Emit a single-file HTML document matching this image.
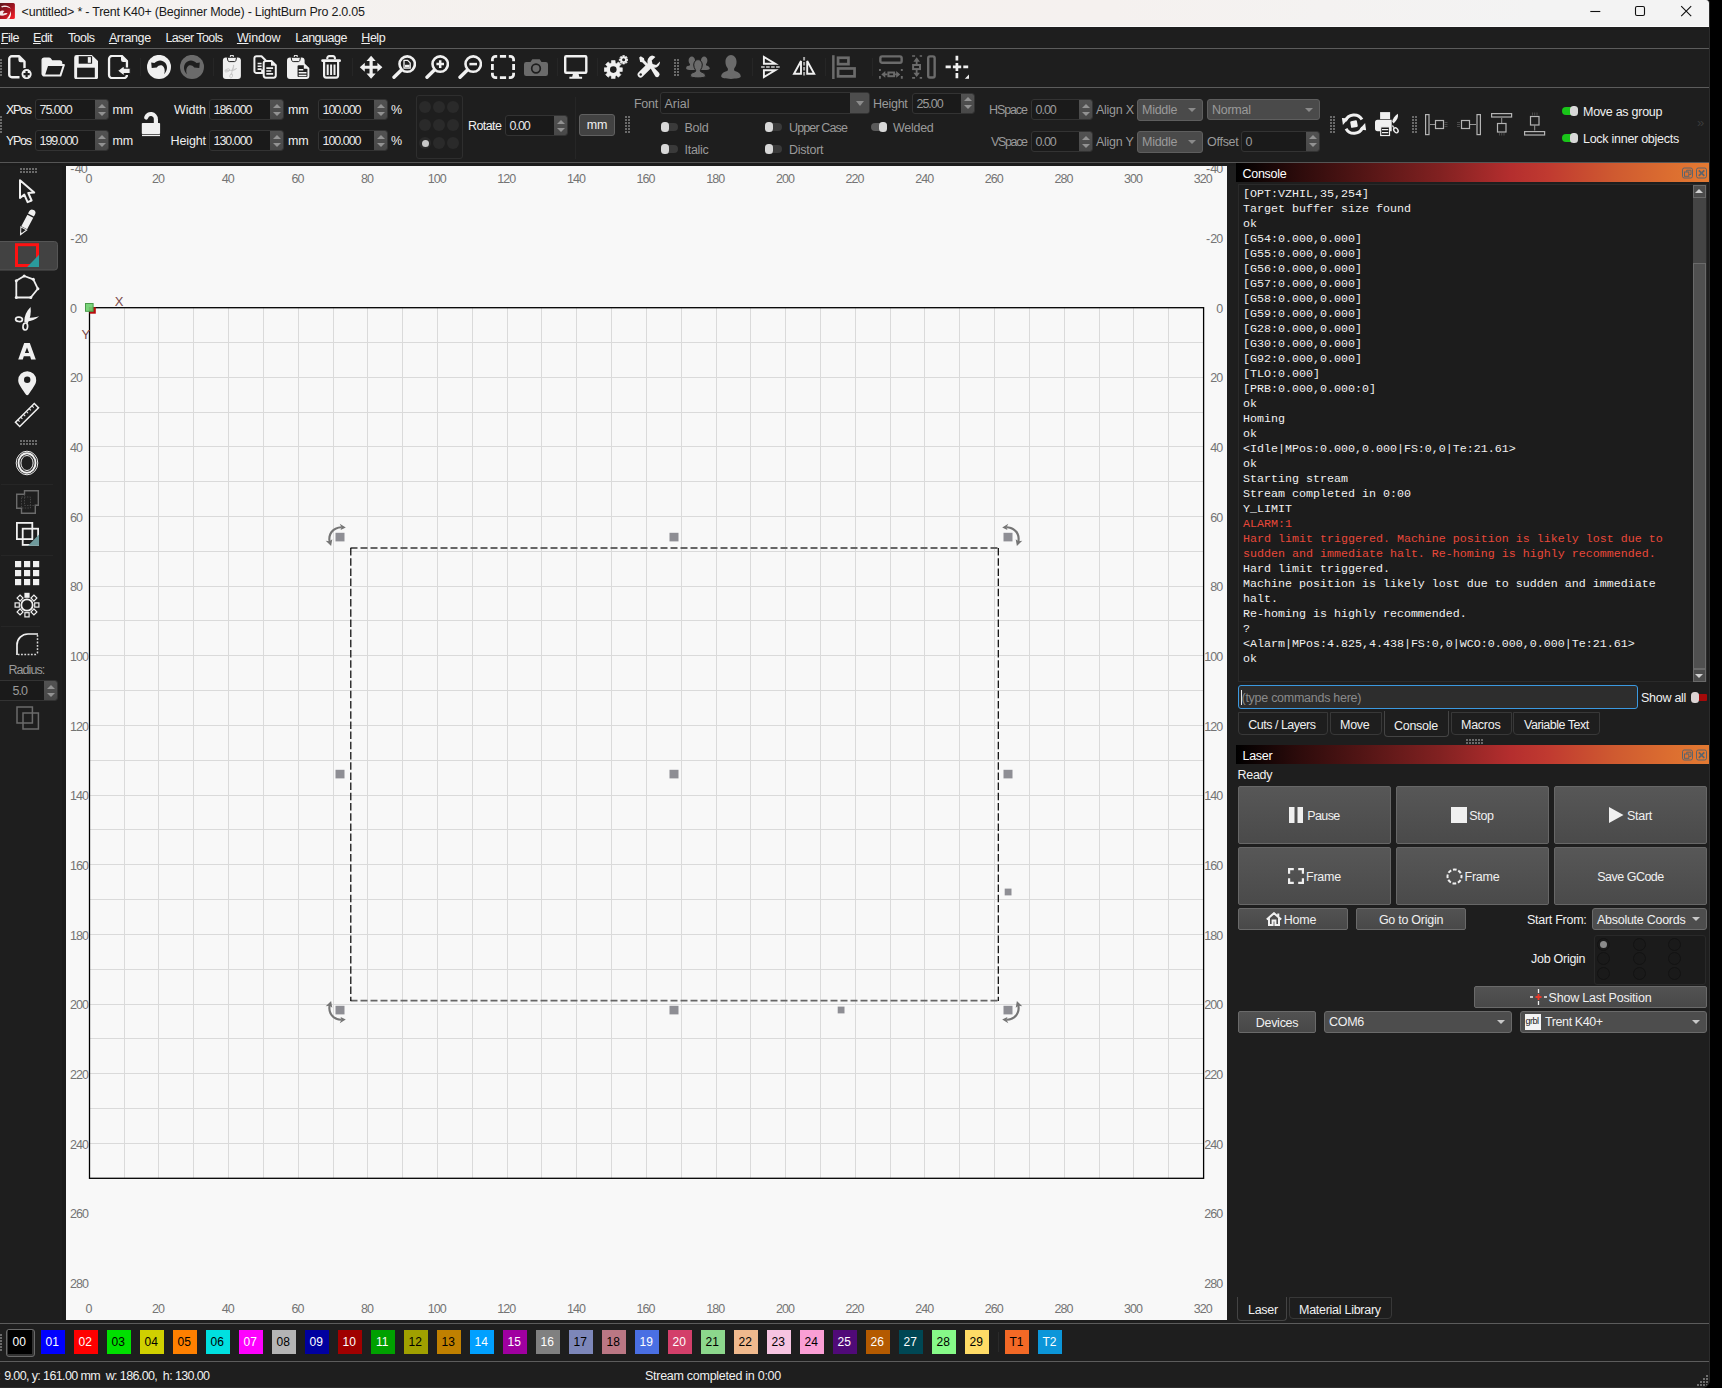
<!DOCTYPE html><html><head><meta charset='utf-8'><title>LightBurn</title><style>
*{box-sizing:border-box;margin:0;padding:0}
html,body{width:1722px;height:1388px;overflow:hidden;background:#000}
body{font-family:"Liberation Sans",sans-serif;font-size:12.500px;letter-spacing:-0.270px;color:#f0f0f0;position:relative}
#win{position:absolute;left:0;top:0;width:1710px;height:1388px;background:#1e1e1e;overflow:hidden;border-radius:0 3px 8px 0;border-right:1px solid #2b2b2b;border-bottom:1px solid #2c2c2c}
.a{position:absolute}
.t{position:absolute;white-space:pre;line-height:14px;height:14px}
.hl{position:absolute;height:1px;background:#5c5c5c}
.sp{position:absolute;background:#1a1a1a;border:1px solid #333;border-radius:3px;height:21px}
.sp .v{position:absolute;left:3.500px;top:3px;line-height:14px;letter-spacing:-1.020px;color:#e8e8e8;white-space:pre}
.sp .b{position:absolute;right:0;top:0;bottom:0;width:13px;background:linear-gradient(#525252,#484848);border-radius:0 2px 2px 0}
.sp .b:before{content:"";position:absolute;left:2.500px;top:3.500px;border:4px solid transparent;border-top:0;border-bottom:4.500px solid #929292}
.sp .b:after{content:"";position:absolute;left:2.500px;bottom:3.500px;border:4px solid transparent;border-bottom:0;border-top:4.500px solid #929292}
.cb{position:absolute;background:#4d4d4d;border:1px solid #6a6a6a;border-radius:3px;height:22px}
.cb .v{position:absolute;left:4px;top:3px;line-height:14px;white-space:pre}
.cb .ar{position:absolute;right:6px;top:8px;border:4px solid transparent;border-bottom:0;border-top:4.500px solid #c8c8c8}
.btn{position:absolute;background:#4d4d4d;border:1px solid #6e6e6e;border-radius:3px;text-align:center;white-space:pre}
.tg{position:absolute;width:16px;height:7.500px;border-radius:4px;background:#333}
.tg i{position:absolute;top:-1.500px;width:8px;height:10.500px;border-radius:3.500px;background:#d8d8d8}
.dim{color:#9a9a9a}
.mono{font-family:"Liberation Mono",monospace;font-size:12px;line-height:15px;white-space:pre;color:#f0f0f0;letter-spacing:0}
.red{color:#e8483a}
.rl{position:absolute;font-size:12.500px;line-height:14px;height:14px;color:#747474;white-space:pre;letter-spacing:-0.950px}
</style></head><body><div id='win'>
<div class='a' style='left:0px;top:0px;width:1709px;height:27px;background:linear-gradient(90deg,#f4f2f1 0%,#f5f1ee 35%,#f5f1ef 65%,#f3f3f3 90%);border-radius:0 3px 0 0'></div>
<div class='a' style='left:0px;top:26px;width:1709px;height:1px;background:#fafafa;'></div>
<svg class='a' style='left:-5px;top:3px' width='20' height='16' viewBox='0 0 20 16'><defs><linearGradient id='lg1' x1='0' y1='0' x2='1' y2='1'><stop offset='0' stop-color='#4a1a1c'/><stop offset='.55' stop-color='#a01420'/><stop offset='1' stop-color='#ff2028'/></linearGradient></defs><rect x='0' y='0' width='19.900' height='15.900' rx='1.500' fill='url(#lg1)'/><path d='M6 3.500c3.500-1.800 7.500-1 10 2.200-2.800-1.700-5.800-2-9-1.200z' fill='#f4e4e4'/><path d='M5 8.500c1.500-1.200 3.200-1.200 4.600-.4-1 .6-1.600 1.500-1.700 2.700 1.400-.8 3-1 4.700-.4-1.500 1.500-3.800 2.400-6.600 2.200-1-.1-1.600-.8-1.400-1.700.2-.8.200-1.600.4-2.400z' fill='#f6eaea'/><path d='M15.800 8c.6 2.600.2 5.200-1.400 7.800h-3c2.400-2 3.800-4.600 4.400-7.800z' fill='#fff'/></svg>
<div class='t ' style='left:21.60px;top:5px;letter-spacing:-0.235px;color:#1a1a1a'>&lt;untitled&gt; * - Trent K40+ (Beginner Mode) - LightBurn Pro 2.0.05</div>
<svg class='a' style='left:1580px;top:0' width='120' height='27' viewBox='0 0 120 27'><g fill='none' stroke='#111' stroke-width='1.100'><path d='M10.300 11.500h10'/><rect x='55.500' y='6.500' width='9' height='9' rx='1.500'/><path d='M101.200 6.200l10 10M111.200 6.200l-10 10'/></g></svg>
<div class='t ' style='left:1.00px;top:31px;letter-spacing:-0.572px;'><u>F</u>ile</div>
<div class='t ' style='left:33.00px;top:31px;letter-spacing:-0.593px;'><u>E</u>dit</div>
<div class='t ' style='left:67.90px;top:31px;letter-spacing:-0.525px;'>Tools</div>
<div class='t ' style='left:108.90px;top:31px;letter-spacing:-0.372px;'><u>A</u>rrange</div>
<div class='t ' style='left:165.40px;top:31px;letter-spacing:-0.597px;'>Laser Tools</div>
<div class='t ' style='left:236.90px;top:31px;letter-spacing:-0.146px;'><u>W</u>indow</div>
<div class='t ' style='left:295.20px;top:31px;letter-spacing:-0.481px;'>Language</div>
<div class='t ' style='left:361.30px;top:31px;letter-spacing:-0.460px;'><u>H</u>elp</div>
<div class='hl' style='left:0px;top:48px;width:1709px;background:#5c5c5c'></div>
<svg class='a' style='left:-3px;top:59px' width='6' height='18' fill='#6a6a6a' shape-rendering='crispEdges'><rect x='0' y='0' width='2' height='2'/><rect x='3' y='0' width='2' height='2'/><rect x='0' y='3' width='2' height='2'/><rect x='3' y='3' width='2' height='2'/><rect x='0' y='6' width='2' height='2'/><rect x='3' y='6' width='2' height='2'/><rect x='0' y='9' width='2' height='2'/><rect x='3' y='9' width='2' height='2'/><rect x='0' y='12' width='2' height='2'/><rect x='3' y='12' width='2' height='2'/><rect x='0' y='15' width='2' height='2'/><rect x='3' y='15' width='2' height='2'/></svg>
<svg class='a' style='left:8px;top:55px' width='24' height='24' viewBox='0 0 24 24'><path d="M11.500 22.300H3.900a2.650 2.650 0 0 1-2.650-2.650V3.900a2.650 2.650 0 0 1 2.650-2.650h7.300l5.300 5.300v6.800" fill="none" stroke="#f0f0f0" stroke-width="2.400" stroke-linejoin="round"/>
<path d="M10.400 1.500v3.600a2.200 2.200 0 0 0 2.200 2.200h3.600z" fill="#f0f0f0"/>
<circle cx="18.600" cy="19.100" r="5.700" fill="#f0f0f0" stroke="#1e1e1e" stroke-width="1.200"/><path d="M18.600 16v6.200M15.500 19.100h6.200" stroke="#1e1e1e" stroke-width="2.200"/></svg>
<svg class='a' style='left:41px;top:55px' width='24' height='24' viewBox='0 0 24 24'><path d="M1.200 19V5a1.900 1.900 0 0 1 1.900-1.900h4.800a1.900 1.900 0 0 1 1.500.8l1.400 2.100h7.900a1.900 1.900 0 0 1 1.900 1.900v2H6L2.200 20.500z" fill="#f0f0f0" stroke="#f0f0f0" stroke-width="1.400" stroke-linejoin="round"/>
<path d="M2.800 20.600L6.300 10h16.600l-3.500 10.600z" fill="#1e1e1e" stroke="#f0f0f0" stroke-width="2" stroke-linejoin="round"/></svg>
<svg class='a' style='left:74px;top:55px' width='24' height='24' viewBox='0 0 24 24'><path d="M2.600 .100h15.200l6.300 5.900v15.900a2.400 2.400 0 0 1-2.400 2.400H2.600a2.400 2.400 0 0 1-2.400-2.400V2.500a2.400 2.400 0 0 1 2.400-2.400z" fill="#f0f0f0"/>
<rect x="4.700" y="1.200" width="13.400" height="7.500" fill="#1e1e1e"/><rect x="13.800" y="2.100" width="3.100" height="5.700" fill="#f0f0f0"/>
<rect x="3.100" y="12.700" width="17.700" height="9.700" fill="#1e1e1e"/></svg>
<svg class='a' style='left:107px;top:55px' width='24' height='24' viewBox='0 0 24 24'><path d="M19.950 13.200V6.100L14.700 .850H5.300A3.250 3.250 0 0 0 2.050 4.100V19.900A3.250 3.250 0 0 0 5.300 23.150H16.700A3.250 3.250 0 0 0 19.950 19.900" fill="none" stroke="#f0f0f0" stroke-width="2.300" stroke-linejoin="round"/>
<path d="M14 1.200v3.600a2.200 2.200 0 0 0 2.200 2.200h3.600z" fill="#f0f0f0"/>
<path d="M10.400 15.800l6.800-5.300v2.600h6v5.400h-6v2.600z" fill="#f0f0f0" stroke="#1e1e1e" stroke-width="1.100" stroke-linejoin="round"/></svg>
<svg class='a' style='left:147px;top:55px' width='24' height='24' viewBox='0 0 24 24'><circle cx="12" cy="11.900" r="12" fill="#f0f0f0"/><path d="M4.200 7.400L4.700 12.900L9.800 12.600C11.300 10.200 13.600 9.600 15.200 10.600C17.600 12.200 18.400 15.500 17.200 19.200C20.600 15.600 20.800 11 18.400 8C15.600 4.800 10.800 4.600 7.400 8.100Z" fill="#1e1e1e"/></svg>
<svg class='a' style='left:180px;top:55px' width='24' height='24' viewBox='0 0 24 24'><circle cx="12" cy="11.900" r="12" fill="#6b6b6b"/><path d="M4.200 7.400L4.700 12.900L9.800 12.600C11.300 10.200 13.600 9.600 15.200 10.600C17.600 12.200 18.400 15.500 17.200 19.200C20.600 15.600 20.800 11 18.400 8C15.600 4.800 10.800 4.600 7.400 8.100Z" fill="#1e1e1e" transform="translate(24 0) scale(-1 1)"/></svg>
<svg class='a' style='left:220px;top:55px' width='24' height='24' viewBox='0 0 24 24'><rect x="2.900" y="2.400" width="18" height="21.600" rx="3" fill="#f0f0f0"/>
<circle cx="11.900" cy="1.700" r="1.500" fill="none" stroke="#f0f0f0" stroke-width="1.300"/>
<path d="M7.200 2.300h9.400l-.7 3.200a1.500 1.500 0 0 1-1.400 1.100H9.300a1.500 1.500 0 0 1-1.400-1.100z" fill="#f0f0f0" stroke="#1e1e1e" stroke-width="1"/>
<g fill="none" stroke="#c4c4c4" stroke-width=".8"><path d="M13.800 10c-1.200 3.500-2 6.500-2.400 10M5.500 15.500c3.500.3 7 0 10.500-1.800"/><ellipse cx="7.300" cy="15.400" rx="2.600" ry="1.300" transform="rotate(-20 7.300 15.400)"/><ellipse cx="11.200" cy="20.800" rx="1.300" ry="2.200" transform="rotate(15 11.200 20.800)"/><path d="M13.300 9.800c.9 1.700.1 4-1.200 5.800M17 13.200c-1.800 1.800-3.800 2.200-5.600 2.400"/></g></svg>
<svg class='a' style='left:253px;top:55px' width='24' height='24' viewBox='0 0 24 24'><path d="M9.200 14.500V18H3.500a2.100 2.100 0 0 1-2.100-2.100V3.300a2.100 2.100 0 0 1 2.100-2.100h5l4 4v4.500" fill="none" stroke="#f0f0f0" stroke-width="2" stroke-linejoin="round"/>
<path d="M4.600 8.500h4M4.600 11.300h4M4.600 14.100h4" stroke="#f0f0f0" stroke-width="1.600"/>
<path d="M12.800 5.900h5.600l4.400 4.400V20.600a2.100 2.100 0 0 1-2.100 2.100h-7.900a2.100 2.100 0 0 1-2.100-2.100V8a2.100 2.100 0 0 1 2.100-2.100z" fill="#1e1e1e" stroke="#f0f0f0" stroke-width="2" stroke-linejoin="round"/>
<path d="M18 5.900v4.800h4.800z" fill="#f0f0f0"/>
<path d="M13.300 13.100h6.800M13.300 16h5M13.300 18.900h6.800" stroke="#f0f0f0" stroke-width="1.600"/></svg>
<svg class='a' style='left:286px;top:55px' width='24' height='24' viewBox='0 0 24 24'><rect x="1" y="2.400" width="17.600" height="21.600" rx="3" fill="#f0f0f0"/>
<circle cx="9.800" cy="1.700" r="1.500" fill="none" stroke="#f0f0f0" stroke-width="1.300"/>
<path d="M5.100 2.300h9.400l-.7 3.200a1.500 1.500 0 0 1-1.400 1.100H7.200a1.500 1.500 0 0 1-1.400-1.100z" fill="#f0f0f0" stroke="#1e1e1e" stroke-width="1"/>
<path d="M12.600 9.300h5.600l4.200 4.200V21a2 2 0 0 1-2 2h-7.800a2 2 0 0 1-2-2V11.300a2 2 0 0 1 2-2z" fill="#1e1e1e" stroke="#f0f0f0" stroke-width="1.900" stroke-linejoin="round"/>
<path d="M17.800 9.300v4.400h4.400z" fill="#f0f0f0"/>
<path d="M12.700 14.700h4.600M12.700 17.700h7.800M12.700 20.600h7.800" stroke="#f0f0f0" stroke-width="1.500"/></svg>
<svg class='a' style='left:319px;top:55px' width='24' height='24' viewBox='0 0 24 24'><path d="M8.300 4.200V3a1.900 1.900 0 0 1 1.900-1.900h3.800a1.900 1.900 0 0 1 1.900 1.900v1.200" fill="none" stroke="#f0f0f0" stroke-width="2.100"/>
<path d="M3.600 5.700h17" stroke="#f0f0f0" stroke-width="2.800" stroke-linecap="round"/>
<path d="M5.100 7v13.600a2 2 0 0 0 2 2h10a2 2 0 0 0 2-2V7" fill="none" stroke="#f0f0f0" stroke-width="2.200"/>
<path d="M8.700 9.500v10.500M12.100 9.500v10.500M15.500 9.500v10.500" stroke="#f0f0f0" stroke-width="2"/></svg>
<svg class='a' style='left:359px;top:55px' width='24' height='24' viewBox='0 0 24 24'><path d="M12.100 .7l4.600 5.300h-3V10.700h4.700v-3l5 4.500-5 4.500v-3h-4.700v4.700h3L12.100 23.700l-4.600-5.300h3V13.700H5.800v3l-5-4.500 5-4.500v3h4.700V6h-3z" fill="#f0f0f0"/></svg>
<svg class='a' style='left:392px;top:55px' width='24' height='24' viewBox='0 0 24 24'><circle cx="15.200" cy="9.100" r="7.700" fill="none" stroke="#f0f0f0" stroke-width="2.600"/><path d="M9.400 15L2 22.300" stroke="#f0f0f0" stroke-width="3.400" stroke-linecap="round"/><path d="M12 5.300h3.600l2.600 2.600v5.200H12z" fill="none" stroke="#f0f0f0" stroke-width="1.300"/><path d="M13 9.800h4.600v2.600H13z" fill="#f0f0f0"/></svg>
<svg class='a' style='left:425px;top:55px' width='24' height='24' viewBox='0 0 24 24'><circle cx="15.200" cy="9.100" r="7.700" fill="none" stroke="#f0f0f0" stroke-width="2.600"/><path d="M9.400 15L2 22.300" stroke="#f0f0f0" stroke-width="3.400" stroke-linecap="round"/><path d="M15.200 5.300v7.600M11.400 9.100h7.600" stroke="#f0f0f0" stroke-width="2.500"/></svg>
<svg class='a' style='left:458px;top:55px' width='24' height='24' viewBox='0 0 24 24'><circle cx="15.200" cy="9.100" r="7.700" fill="none" stroke="#f0f0f0" stroke-width="2.600"/><path d="M9.400 15L2 22.300" stroke="#f0f0f0" stroke-width="3.400" stroke-linecap="round"/><path d="M11.400 9.100h7.600" stroke="#f0f0f0" stroke-width="2.500"/></svg>
<svg class='a' style='left:491px;top:55px' width='24' height='24' viewBox='0 0 24 24'><path d="M1.4 6.2V4.6a3.2 3.2 0 0 1 3.2-3.2H6.2M17.8 1.4H19.400000000000002a3.2 3.2 0 0 1 3.2 3.2V6.2M22.6 17.8V19.400000000000002a3.2 3.2 0 0 1-3.2 3.2H17.8M6.2 22.6H4.6a3.2 3.2 0 0 1-3.2-3.2V17.8M8.9 1.4H15.1M8.9 22.6H15.1M1.4 8.9V15.1M22.6 8.9V15.1" fill="none" stroke="#f0f0f0" stroke-width="2.800"/></svg>
<svg class='a' style='left:524px;top:55px' width='24' height='24' viewBox='0 0 24 24'><path d="M2.200 7h4.300l1.800-2.800h7.400L17.500 7h4.300A2.200 2.200 0 0 1 24 9.200v9.600a2.200 2.200 0 0 1-2.200 2.200H2.200A2.200 2.200 0 0 1 0 18.800V9.200A2.200 2.200 0 0 1 2.200 7z" fill="#6b6b6b"/><circle cx="12" cy="13.500" r="4.300" fill="#6b6b6b" stroke="#1e1e1e" stroke-width="1.700"/></svg>
<svg class='a' style='left:564px;top:55px' width='24' height='24' viewBox='0 0 24 24'><rect x="1.200" y="1.200" width="21.100" height="16.600" rx="1" fill="none" stroke="#f0f0f0" stroke-width="2.400"/>
<path d="M9 18.500h5.500l.8 3.200h2.800v2H5.400v-2h2.800z" fill="#f0f0f0"/></svg>
<svg class='a' style='left:604px;top:55px' width='24' height='24' viewBox='0 0 24 24'><path d="M18.32 12.79 L18.32 16.41 L15.83 16.50 L15.26 17.88 L16.96 19.70 L14.40 22.26 L12.58 20.56 L11.20 21.13 L11.11 23.62 L7.49 23.62 L7.40 21.13 L6.02 20.56 L4.20 22.26 L1.64 19.70 L3.34 17.88 L2.77 16.50 L0.28 16.41 L0.28 12.79 L2.77 12.70 L3.34 11.32 L1.64 9.50 L4.20 6.94 L6.02 8.64 L7.40 8.07 L7.49 5.58 L11.11 5.58 L11.20 8.07 L12.58 8.64 L14.40 6.94 L16.96 9.50 L15.26 11.32 L15.83 12.70Z" fill="#f0f0f0" stroke="#f0f0f0" stroke-width="0.6" stroke-linejoin="round"/><circle cx="9.3" cy="14.6" r="3.3" fill="#1e1e1e"/><path d="M23.91 3.93 L23.91 5.67 L22.67 5.69 L22.40 6.34 L23.26 7.24 L22.04 8.46 L21.14 7.60 L20.49 7.87 L20.47 9.11 L18.73 9.11 L18.71 7.87 L18.06 7.60 L17.16 8.46 L15.94 7.24 L16.80 6.34 L16.53 5.69 L15.29 5.67 L15.29 3.93 L16.53 3.91 L16.80 3.26 L15.94 2.36 L17.16 1.14 L18.06 2.00 L18.71 1.73 L18.73 0.49 L20.47 0.49 L20.49 1.73 L21.14 2.00 L22.04 1.14 L23.26 2.36 L22.40 3.26 L22.67 3.91Z" fill="#f0f0f0" stroke="#f0f0f0" stroke-width="0.6" stroke-linejoin="round"/><circle cx="19.6" cy="4.8" r="1.5" fill="#1e1e1e"/></svg>
<svg class='a' style='left:637px;top:55px' width='24' height='24' viewBox='0 0 24 24'><path d="M2.200 2.600l1.600-1.400 3.200 2 .3 2 5.400 5.600-2 2-5.500-5.500-2-.3z" fill="#f0f0f0"/>
<path d="M13.200 12.800l2-2 6.800 7a2.600 2.600 0 0 1-3.600 3.700z" fill="#f0f0f0"/>
<path d="M15 .6a6 6 0 0 0-4.300 7.600L1.400 17.600a2.900 2.900 0 0 0 4.100 4.100l9.400-9.300A6 6 0 0 0 23 6.600l-3.800 3.500-3.600-1-.9-3.600L18.400 1.900A6 6 0 0 0 15 .6z" fill="#f0f0f0"/>
<circle cx="3.700" cy="19.500" r="1.200" fill="#1e1e1e"/></svg>
<svg class='a' style='left:686px;top:55px' width='24' height='24' viewBox='0 0 24 24'><path d="M0.18399999999999928 13.820000000000002c0-3 1.08-2.43 3.3480000000000003-3.24c0.648-0.27 0.648-1.1880000000000002 0.162-1.836c-0.7020000000000001-0.9720000000000001-1.08-1.9440000000000002-1.08-3.4560000000000004c0-2.16 1.4040000000000001-3.8880000000000003 3.1860000000000004-3.8880000000000003s3.1860000000000004 1.7280000000000002 3.1860000000000004 3.8880000000000003c0 1.512-0.378 2.484-1.08 3.4560000000000004c-0.48600000000000004 0.648-0.48600000000000004 1.566 0.162 1.836c2.2680000000000002 0.81 3.3480000000000003 1.62 3.3480000000000003 3.24c0 1.7280000000000002-11.232000000000001 1.7280000000000002-11.232000000000001 0z" fill="#6b6b6b"/><path d="M12.584 13.820000000000002c0-3 1.08-2.43 3.3480000000000003-3.24c0.648-0.27 0.648-1.1880000000000002 0.162-1.836c-0.7020000000000001-0.9720000000000001-1.08-1.9440000000000002-1.08-3.4560000000000004c0-2.16 1.4040000000000001-3.8880000000000003 3.1860000000000004-3.8880000000000003s3.1860000000000004 1.7280000000000002 3.1860000000000004 3.8880000000000003c0 1.512-0.378 2.484-1.08 3.4560000000000004c-0.48600000000000004 0.648-0.48600000000000004 1.566 0.162 1.836c2.2680000000000002 0.81 3.3480000000000003 1.62 3.3480000000000003 3.24c0 1.7280000000000002-11.232000000000001 1.7280000000000002-11.232000000000001 0z" fill="#6b6b6b"/><path d="M4.5120000000000005 21.159999999999997c0-3 1.44-3.2399999999999998 4.4639999999999995-4.32c0.864-0.36 0.864-1.584 0.216-2.448c-0.9359999999999999-1.296-1.44-2.592-1.44-4.608c0-2.88 1.8719999999999999-5.184 4.248-5.184s4.248 2.304 4.248 5.184c0 2.016-0.504 3.312-1.44 4.608c-0.648 0.864-0.648 2.088 0.216 2.448c3.024 1.08 4.4639999999999995 2.16 4.4639999999999995 4.32c0 2.304-14.975999999999999 2.304-14.975999999999999 0z" fill="#6b6b6b" stroke="#1e1e1e" stroke-width="1"/></svg>
<svg class='a' style='left:719px;top:55px' width='24' height='24' viewBox='0 0 24 24'><path d="M2.224 21.619999999999997c0-3 1.88-4.2299999999999995 5.827999999999999-5.64c1.128-0.47 1.128-2.068 0.282-3.1959999999999997c-1.222-1.692-1.88-3.384-1.88-6.016c0-3.76 2.444-6.768 5.546-6.768s5.546 3.008 5.546 6.768c0 2.6319999999999997-0.6579999999999999 4.324-1.88 6.016c-0.846 1.128-0.846 2.726 0.282 3.1959999999999997c3.948 1.41 5.827999999999999 2.82 5.827999999999999 5.64c0 3.008-19.552 3.008-19.552 0z" fill="#6b6b6b"/></svg>
<svg class='a' style='left:759px;top:55px' width='24' height='24' viewBox='0 0 24 24'><path d="M4.900 2V8.700H16.300z" fill="none" stroke="#f0f0f0" stroke-width="1.900"/>
<path d="M4.900 22V15.200H16.300z" fill="none" stroke="#f0f0f0" stroke-width="1.900"/>
<path d="M2.100 12.100h19.800" stroke="#a4a4a4" stroke-width="2" stroke-dasharray="3.600 1.400"/></svg>
<svg class='a' style='left:792px;top:55px' width='24' height='24' viewBox='0 0 24 24'><path d="M9 6V18.700H2z" fill="none" stroke="#f0f0f0" stroke-width="1.900"/>
<path d="M15.200 6V18.700h7z" fill="none" stroke="#f0f0f0" stroke-width="1.900"/>
<path d="M12.100 2v19.800" stroke="#a4a4a4" stroke-width="2" stroke-dasharray="3.600 1.400"/></svg>
<svg class='a' style='left:832px;top:55px' width='24' height='24' viewBox='0 0 24 24'><path d="M1.350 .2v23.800" stroke="#6b6b6b" stroke-width="2.500"/>
<rect x="6.050" y="2.750" width="10.400" height="6.400" fill="none" stroke="#6b6b6b" stroke-width="2.700"/>
<rect x="6.050" y="13.450" width="16.500" height="7.900" fill="none" stroke="#6b6b6b" stroke-width="2.700"/></svg>
<svg class='a' style='left:879px;top:55px' width='24' height='24' viewBox='0 0 24 24'><rect x="1.350" y="1.400" width="21.300" height="6.400" rx="1.800" fill="none" stroke="#6b6b6b" stroke-width="2.400"/>
<path d="M.9 13.900v2.200M.9 20.900v2.800M22.800 13.900v2.200M22.800 20.900v2.800" stroke="#6b6b6b" stroke-width="1.900"/>
<rect x="9.400" y="17.500" width="5.700" height="3.700" fill="none" stroke="#6b6b6b" stroke-width="2"/>
<path d="M8.400 19.400H5.500M16.100 19.400h2.900" stroke="#6b6b6b" stroke-width="1.800"/>
<path d="M6.300 16L2.300 19.400l4 3.400zM17.200 16l4 3.400-4 3.400z" fill="#6b6b6b"/></svg>
<svg class='a' style='left:912px;top:55px' width='24' height='24' viewBox='0 0 24 24'><rect x="16.200" y="1.400" width="6.450" height="21.100" rx="1.800" fill="none" stroke="#6b6b6b" stroke-width="2.400"/>
<path d="M.1 1h3M7.700 1h2.400M.1 22.900h3M7.700 22.900h2.400" stroke="#6b6b6b" stroke-width="1.700"/>
<rect x="1.100" y="10" width="6.900" height="4.100" fill="none" stroke="#6b6b6b" stroke-width="2"/>
<path d="M4.650 9V6M4.650 15.100V18.200" stroke="#6b6b6b" stroke-width="1.800"/>
<path d="M1.400 6.800L4.650 2.300l3.250 4.500zM1.400 17.700L4.650 21.900l3.250-4.200z" fill="#6b6b6b"/></svg>
<svg class='a' style='left:945px;top:55px' width='24' height='24' viewBox='0 0 24 24'><path d="M11.900 .8v4.600M11.900 8.100v7.900M11.900 17.900v5.450" stroke="#f0f0f0" stroke-width="2.700"/>
<path d="M.6 11.800h5.200M7.900 11.800h8.300M18.300 11.800h4.900" stroke="#f0f0f0" stroke-width="2.700"/>
<path d="M24.100 19.400v4.300H19.800z" fill="#f0f0f0"/></svg>
<div class='a' style='left:139.5px;top:58px;width:1px;height:18px;background:#262626;'></div>
<div class='a' style='left:213px;top:58px;width:1px;height:18px;background:#262626;'></div>
<div class='a' style='left:351.5px;top:58px;width:1px;height:18px;background:#262626;'></div>
<div class='a' style='left:556.5px;top:58px;width:1px;height:18px;background:#262626;'></div>
<div class='a' style='left:597px;top:58px;width:1px;height:18px;background:#262626;'></div>
<div class='a' style='left:752px;top:58px;width:1px;height:18px;background:#262626;'></div>
<div class='a' style='left:824.5px;top:58px;width:1px;height:18px;background:#262626;'></div>
<div class='a' style='left:872px;top:58px;width:1px;height:18px;background:#262626;'></div>
<svg class='a' style='left:674px;top:59px' width='6' height='18' fill='#6a6a6a' shape-rendering='crispEdges'><rect x='0' y='0' width='2' height='2'/><rect x='3' y='0' width='2' height='2'/><rect x='0' y='3' width='2' height='2'/><rect x='3' y='3' width='2' height='2'/><rect x='0' y='6' width='2' height='2'/><rect x='3' y='6' width='2' height='2'/><rect x='0' y='9' width='2' height='2'/><rect x='3' y='9' width='2' height='2'/><rect x='0' y='12' width='2' height='2'/><rect x='3' y='12' width='2' height='2'/><rect x='0' y='15' width='2' height='2'/><rect x='3' y='15' width='2' height='2'/></svg>
<div class='hl' style='left:0px;top:87px;width:1709px;background:#5c5c5c'></div>
<svg class='a' style='left:-3px;top:116px' width='6' height='18' fill='#6a6a6a' shape-rendering='crispEdges'><rect x='0' y='0' width='2' height='2'/><rect x='3' y='0' width='2' height='2'/><rect x='0' y='3' width='2' height='2'/><rect x='3' y='3' width='2' height='2'/><rect x='0' y='6' width='2' height='2'/><rect x='3' y='6' width='2' height='2'/><rect x='0' y='9' width='2' height='2'/><rect x='3' y='9' width='2' height='2'/><rect x='0' y='12' width='2' height='2'/><rect x='3' y='12' width='2' height='2'/><rect x='0' y='15' width='2' height='2'/><rect x='3' y='15' width='2' height='2'/></svg>
<div class='t ' style='left:6.00px;top:103px;letter-spacing:-1.294px;'>XPos</div>
<div class='sp' style='left:35px;top:99px;width:74px;height:21px'><span class='v'>75.000</span><span class='b' style='width:13px'></span></div>
<div class='t ' style='left:112.50px;top:103px;'>mm</div>
<div class='t ' style='left:6.00px;top:134px;letter-spacing:-1.294px;'>YPos</div>
<div class='sp' style='left:35px;top:130px;width:74px;height:21px'><span class='v'>199.000</span><span class='b' style='width:13px'></span></div>
<div class='t ' style='left:112.50px;top:134px;'>mm</div>
<svg class='a' style='left:141px;top:111px' width='21' height='26' viewBox='0 0 21 26'><path d='M14.900 12.500V8A5 5 0 0 0 5.100 6.600' fill='none' stroke='#f0f0f0' stroke-width='4' stroke-linecap='round'/><path d='M14.900 12.500V8' fill='none' stroke='#f0f0f0' stroke-width='4'/><rect x='.8' y='11.900' width='18.300' height='11.100' rx='.8' fill='#f0f0f0'/><rect x='1' y='23.700' width='18' height='1.400' fill='#f0f0f0'/></svg>
<div class='t ' style='left:174.00px;top:103px;letter-spacing:-0.008px;'>Width</div>
<div class='sp' style='left:209px;top:99px;width:75px;height:21px'><span class='v'>186.000</span><span class='b' style='width:13px'></span></div>
<div class='t ' style='left:288.00px;top:103px;'>mm</div>
<div class='sp' style='left:318px;top:99px;width:70px;height:21px'><span class='v'>100.000</span><span class='b' style='width:13px'></span></div>
<div class='t ' style='left:391.00px;top:103px;'>%</div>
<div class='t ' style='left:170.50px;top:134px;letter-spacing:-0.127px;'>Height</div>
<div class='sp' style='left:209px;top:130px;width:75px;height:21px'><span class='v'>130.000</span><span class='b' style='width:13px'></span></div>
<div class='t ' style='left:288.00px;top:134px;'>mm</div>
<div class='sp' style='left:318px;top:130px;width:70px;height:21px'><span class='v'>100.000</span><span class='b' style='width:13px'></span></div>
<div class='t ' style='left:391.00px;top:134px;'>%</div>
<div class='a' style='left:416px;top:95px;width:47px;height:64px;border:1px solid #2e2e2e;border-radius:3px'></div>
<div class='a' style='left:419px;top:101px;width:12px;height:12px;border-radius:6px;background:#2a2a2a'></div>
<div class='a' style='left:433px;top:101px;width:12px;height:12px;border-radius:6px;background:#2a2a2a'></div>
<div class='a' style='left:447px;top:101px;width:12px;height:12px;border-radius:6px;background:#2a2a2a'></div>
<div class='a' style='left:419px;top:119px;width:12px;height:12px;border-radius:6px;background:#2a2a2a'></div>
<div class='a' style='left:433px;top:119px;width:12px;height:12px;border-radius:6px;background:#2a2a2a'></div>
<div class='a' style='left:447px;top:119px;width:12px;height:12px;border-radius:6px;background:#2a2a2a'></div>
<div class='a' style='left:419px;top:137px;width:12px;height:12px;border-radius:6px;background:#2a2a2a'></div>
<div class='a' style='left:433px;top:137px;width:12px;height:12px;border-radius:6px;background:#2a2a2a'></div>
<div class='a' style='left:447px;top:137px;width:12px;height:12px;border-radius:6px;background:#2a2a2a'></div>
<div class='a' style='left:421.500px;top:139.500px;width:7px;height:7px;border-radius:4px;background:#c8c8c8'></div>
<div class='t ' style='left:468.00px;top:119px;letter-spacing:-0.583px;'>Rotate</div>
<div class='sp' style='left:505px;top:115px;width:63px;height:21px'><span class='v'>0.00</span><span class='b' style='width:13px'></span></div>
<div class='a' style='left:574.5px;top:97px;width:1px;height:62px;background:#262626;'></div>
<div class='btn' style='left:579px;top:114px;width:36px;height:22px;line-height:20px;background:#424242;border-color:#606060'>mm</div>
<svg class='a' style='left:625px;top:116px' width='6' height='18' fill='#6a6a6a' shape-rendering='crispEdges'><rect x='0' y='0' width='2' height='2'/><rect x='3' y='0' width='2' height='2'/><rect x='0' y='3' width='2' height='2'/><rect x='3' y='3' width='2' height='2'/><rect x='0' y='6' width='2' height='2'/><rect x='3' y='6' width='2' height='2'/><rect x='0' y='9' width='2' height='2'/><rect x='3' y='9' width='2' height='2'/><rect x='0' y='12' width='2' height='2'/><rect x='3' y='12' width='2' height='2'/><rect x='0' y='15' width='2' height='2'/><rect x='3' y='15' width='2' height='2'/></svg>
<div class='t dim' style='left:634.00px;top:97px;'>Font</div>
<div class='sp' style='left:660px;top:92px;width:210px;height:22px;background:#1b1b1b'><span class='v' style='letter-spacing:0;color:#9a9a9a;top:4px'>Arial</span><span class='b' style='width:19px;background:#4d4d4d'></span></div>
<div class='a' style='left:855.500px;top:100px;border:4.500px solid transparent;border-bottom:0;border-top:5px solid #8a8a8a'></div>
<div class='a' style='left:852px;top:93px;width:17px;height:20px;background:#4d4d4d;border-radius:0 2px 2px 0'></div>
<div class='a' style='left:856px;top:101px;border:4.500px solid transparent;border-bottom:0;border-top:5px solid #8c8c8c'></div>
<div class='t dim' style='left:873.00px;top:97px;'>Height</div>
<div class='sp' style='left:912px;top:92.5px;width:63px;height:21px'><span class='v' style='color:#9a9a9a'>25.00</span><span class='b' style='width:13px'></span></div>
<div class='tg' style='left:662px;top:123px;background:#3a3a3a'><i style='left:-1px'></i></div>
<div class='t dim' style='left:684.50px;top:121px;'>Bold</div>
<div class='tg' style='left:662px;top:145px;background:#3a3a3a'><i style='left:-1px'></i></div>
<div class='t dim' style='left:684.50px;top:143px;'>Italic</div>
<div class='tg' style='left:766px;top:123px;background:#3a3a3a'><i style='left:-1px'></i></div>
<div class='t dim' style='left:789.00px;top:121px;letter-spacing:-0.866px;'>Upper Case</div>
<div class='tg' style='left:766px;top:145px;background:#3a3a3a'><i style='left:-1px'></i></div>
<div class='t dim' style='left:789.00px;top:143px;'>Distort</div>
<div class='tg' style='left:871px;top:123px;background:#5a5a5a'><i style='left:8px'></i></div>
<div class='t dim' style='left:893.00px;top:121px;'>Welded</div>
<div class='t dim' style='left:989.00px;top:103px;letter-spacing:-1.106px;'>HSpace</div>
<div class='sp' style='left:1031px;top:99px;width:62px;height:21px'><span class='v' style='color:#9a9a9a'>0.00</span><span class='b' style='width:13px'></span></div>
<div class='t dim' style='left:991.00px;top:135px;letter-spacing:-1.350px;'>VSpace</div>
<div class='sp' style='left:1031px;top:131px;width:62px;height:21px'><span class='v' style='color:#9a9a9a'>0.00</span><span class='b' style='width:13px'></span></div>
<div class='t dim' style='left:1096.00px;top:103px;'>Align X</div>
<div class='cb' style='left:1137px;top:98.5px;width:66px;height:22px;border-color:#5e5e5e;background:#4a4a4a'><span class='v' style='top:3px;color:#9a9a9a'>Middle</span><span class='ar' style='border-top-color:#8a8a8a'></span></div>
<div class='t dim' style='left:1096.00px;top:135px;'>Align Y</div>
<div class='cb' style='left:1137px;top:130.5px;width:66px;height:22px;border-color:#5e5e5e;background:#4a4a4a'><span class='v' style='top:3px;color:#9a9a9a'>Middle</span><span class='ar' style='border-top-color:#8a8a8a'></span></div>
<div class='cb' style='left:1207px;top:98.5px;width:113px;height:21px;border-color:#5e5e5e;background:#4a4a4a'><span class='v' style='top:3px;color:#9a9a9a'>Normal</span><span class='ar' style='border-top-color:#8a8a8a'></span></div>
<div class='t dim' style='left:1207.00px;top:135px;'>Offset</div>
<div class='sp' style='left:1241px;top:130.5px;width:79px;height:21px'><span class='v' style='color:#9a9a9a'>0</span><span class='b' style='width:13px'></span></div>
<svg class='a' style='left:1330px;top:116px' width='6' height='18' fill='#6a6a6a' shape-rendering='crispEdges'><rect x='0' y='0' width='2' height='2'/><rect x='3' y='0' width='2' height='2'/><rect x='0' y='3' width='2' height='2'/><rect x='3' y='3' width='2' height='2'/><rect x='0' y='6' width='2' height='2'/><rect x='3' y='6' width='2' height='2'/><rect x='0' y='9' width='2' height='2'/><rect x='3' y='9' width='2' height='2'/><rect x='0' y='12' width='2' height='2'/><rect x='3' y='12' width='2' height='2'/><rect x='0' y='15' width='2' height='2'/><rect x='3' y='15' width='2' height='2'/></svg>
<svg class='a' style='left:1341px;top:112px' width='26' height='25' viewBox='0 0 26 25'><g fill='none' stroke='#f0f0f0' stroke-width='3'><path d='M4.350 8.950A9.200 9.200 0 0 1 20.970 7.500'/><path d='M21.650 15.250A9.200 9.200 0 0 1 5.030 16.700'/></g><path d='M.9 6L7.600 6.600 1.900 13.100z' fill='#f0f0f0'/><path d='M25.100 18.200L18.400 17.600 24.100 11.100z' fill='#f0f0f0'/><rect x='9.600' y='8.700' width='6.800' height='6.800' rx='1' fill='#f0f0f0' transform='rotate(-10 13 12.100)'/></svg>
<svg class='a' style='left:1375px;top:111px' width='26' height='26' viewBox='0 0 26 26'><rect x='5.100' y='1.100' width='10' height='7' fill='#f0f0f0'/><path d='M2.600 8.800H16.700V20.200H2.600A2.600 2.600 0 0 1 0 17.600V11.400A2.600 2.600 0 0 1 2.600 8.800z' fill='#f0f0f0'/><rect x='5.700' y='15.900' width='8.800' height='8.600' fill='#161616' stroke='#f0f0f0' stroke-width='1.200'/><path d='M7 18.600h6.300M7 21.600h6.300' stroke='#f0f0f0' stroke-width='1.300'/><path d='M22.900 2.700c.8 3.300-.9 6.600-4.300 9.700l-1.500-1.800c.9-3.200 2.800-6 5.800-7.900z' fill='#f0f0f0'/><ellipse cx='20.900' cy='19.300' rx='1.900' ry='2.700' transform='rotate(-35 20.900 19.300)' fill='none' stroke='#f0f0f0' stroke-width='1.400'/><path d='M17.300 14.500l2 2.500' stroke='#d0d0d0' stroke-width='1.300'/></svg>
<svg class='a' style='left:1412px;top:116px' width='6' height='18' fill='#6a6a6a' shape-rendering='crispEdges'><rect x='0' y='0' width='2' height='2'/><rect x='3' y='0' width='2' height='2'/><rect x='0' y='3' width='2' height='2'/><rect x='3' y='3' width='2' height='2'/><rect x='0' y='6' width='2' height='2'/><rect x='3' y='6' width='2' height='2'/><rect x='0' y='9' width='2' height='2'/><rect x='3' y='9' width='2' height='2'/><rect x='0' y='12' width='2' height='2'/><rect x='3' y='12' width='2' height='2'/><rect x='0' y='15' width='2' height='2'/><rect x='3' y='15' width='2' height='2'/></svg>
<svg class='a' style='left:1424px;top:112px' width='125' height='26' viewBox='0 0 125 26'><g fill='none' stroke='#b4b4b4' stroke-width='1.200'>
<rect x='1.600' y='2.600' width='3.400' height='20'/><rect x='11.500' y='8.500' width='8' height='8'/><path d='M6 12.500h5' stroke-width='.8'/>
<rect x='53' y='2.600' width='3.400' height='20'/><rect x='37.500' y='8.500' width='8' height='8'/><path d='M46 12.500h6' stroke-width='.8'/>
<rect x='67.600' y='1.600' width='20' height='3.400'/><rect x='73.500' y='11.500' width='8.500' height='8.500'/><path d='M77.700 6v5' stroke-width='.8'/>
<rect x='100.600' y='19.600' width='20' height='3.400'/><rect x='106.500' y='4.500' width='8.500' height='8.500'/><path d='M110.700 13.500v5' stroke-width='.8'/>
</g><g stroke='#555' stroke-width='.8'><path d='M20.500 10.500h3M20.500 12.500h3M20.500 14.500h3M33 10.500h3M33 12.500h3M33 14.500h3M75.500 21v2.500M77.700 21v2.500M80 21v2.500M108.500 .5v3M110.700 .5v3M113 .5v3'/></g></svg>
<div class='tg' style='left:1562px;top:107px;background:#19c519'><i style='left:8px'></i></div>
<div class='t ' style='left:1583.00px;top:105px;'>Move as group</div>
<div class='tg' style='left:1562px;top:134px;background:#19c519'><i style='left:8px'></i></div>
<div class='t ' style='left:1583.00px;top:132px;'>Lock inner objects</div>
<div class='t ' style='left:1697.00px;top:116px;color:#3a3a3a;font-size:13px'>»</div>
<div class='hl' style='left:0px;top:162px;width:1709px;background:#555'></div>
<div class='a' style='left:0px;top:163px;width:1709px;height:3px;background:#1c1c1c;'></div>
<svg class='a' style='left:66px;top:166px' width='1161' height='1154' viewBox='66 166 1161 1154'><rect x='66' y='166' width='1161' height='1154' fill='#f8f8f8'/><path d='M124.5 308V1178M158.5 308V1178M193.5 308V1178M228.5 308V1178M263.5 308V1178M298.5 308V1178M333.5 308V1178M367.5 308V1178M402.5 308V1178M437.5 308V1178M472.5 308V1178M507.5 308V1178M541.5 308V1178M576.5 308V1178M611.5 308V1178M646.5 308V1178M681.5 308V1178M716.5 308V1178M750.5 308V1178M785.5 308V1178M820.5 308V1178M855.5 308V1178M890.5 308V1178M924.5 308V1178M959.5 308V1178M994.5 308V1178M1029.5 308V1178M1064.5 308V1178M1099.5 308V1178M1133.5 308V1178M1168.5 308V1178M89 342.5H1203M89 377.5H1203M89 412.5H1203M89 446.5H1203M89 481.5H1203M89 516.5H1203M89 551.5H1203M89 586.5H1203M89 620.5H1203M89 655.5H1203M89 690.5H1203M89 725.5H1203M89 760.5H1203M89 795.5H1203M89 829.5H1203M89 864.5H1203M89 899.5H1203M89 934.5H1203M89 969.5H1203M89 1004.5H1203M89 1038.5H1203M89 1073.5H1203M89 1108.5H1203M89 1143.5H1203' stroke='#dadada' stroke-width='1' fill='none' shape-rendering='crispEdges'/><rect x='89.500' y='307.700' width='1114.100' height='870.600' fill='none' stroke='#000' stroke-width='1.300'/><rect x='89.600' y='307.200' width='6.200' height='6.500' fill='#b80c0c'/><rect x='85.500' y='303.500' width='7.600' height='7.800' fill='#6fd06f' fill-opacity='.92' stroke='#4a9a4a' stroke-width='1'/><path d='M350.500 548H998.500' stroke='#666' stroke-width='1.800' stroke-dasharray='7 3' fill='none'/><path d='M350.500 1000.700H998.500' stroke='#666' stroke-width='1.800' stroke-dasharray='7 3' fill='none'/><path d='M350.800 548V1001' stroke='#000' stroke-width='1.200' stroke-dasharray='7.500 2.700' fill='none'/><path d='M998.300 548V1001' stroke='#000' stroke-width='1.200' stroke-dasharray='7.500 2.700' fill='none'/><rect x='335.5' y='532.8' width='9' height='8.600' fill='#8e8e94'/><rect x='669.5' y='532.8' width='9' height='8.600' fill='#8e8e94'/><rect x='1003.5' y='532.8' width='9' height='8.600' fill='#8e8e94'/><rect x='335.5' y='769.8' width='9' height='8.600' fill='#8e8e94'/><rect x='669.5' y='769.8' width='9' height='8.600' fill='#8e8e94'/><rect x='1003.5' y='769.8' width='9' height='8.600' fill='#8e8e94'/><rect x='335.5' y='1005.8' width='9' height='8.600' fill='#8e8e94'/><rect x='669.5' y='1005.8' width='9' height='8.600' fill='#8e8e94'/><rect x='1003.5' y='1005.8' width='9' height='8.600' fill='#8e8e94'/><rect x='1004.7' y='888.6' width='6.800' height='6.800' fill='#8e8e94'/><rect x='837.7' y='1006.6' width='6.800' height='6.800' fill='#8e8e94'/><g transform='translate(340 537) scale(1 1)'><g fill='#757575' stroke='none'><path d='M-11.200 5.500 C-13.500 -3 -8 -10.500 1.500 -10.800 L1.700 -8.800 C-6.300 -8.500 -10.900 -2.500 -9.200 5z'/><path d='M-0.300 -13.200 L5.800 -9.500 L0.600 -7.100 L1.500 -9.700z'/><path d='M-14.300 3.800 L-8.900 9 L-7.700 2.300 L-10.300 4.300z'/></g></g><g transform='translate(1008 537) scale(-1 1)'><g fill='#757575' stroke='none'><path d='M-11.200 5.500 C-13.500 -3 -8 -10.500 1.500 -10.800 L1.700 -8.800 C-6.300 -8.500 -10.900 -2.500 -9.200 5z'/><path d='M-0.300 -13.200 L5.800 -9.500 L0.600 -7.100 L1.500 -9.700z'/><path d='M-14.300 3.800 L-8.900 9 L-7.700 2.300 L-10.300 4.300z'/></g></g><g transform='translate(340 1010) scale(1 -1)'><g fill='#757575' stroke='none'><path d='M-11.200 5.500 C-13.500 -3 -8 -10.500 1.500 -10.800 L1.700 -8.800 C-6.300 -8.500 -10.900 -2.500 -9.200 5z'/><path d='M-0.300 -13.200 L5.800 -9.500 L0.600 -7.100 L1.500 -9.700z'/><path d='M-14.300 3.800 L-8.900 9 L-7.700 2.300 L-10.300 4.300z'/></g></g><g transform='translate(1008 1010) scale(-1 -1)'><g fill='#757575' stroke='none'><path d='M-11.200 5.500 C-13.500 -3 -8 -10.500 1.500 -10.800 L1.700 -8.800 C-6.300 -8.500 -10.900 -2.500 -9.200 5z'/><path d='M-0.300 -13.200 L5.800 -9.500 L0.600 -7.100 L1.500 -9.700z'/><path d='M-14.300 3.800 L-8.900 9 L-7.700 2.300 L-10.300 4.300z'/></g></g></svg>
<div class='t ' style='left:114.70px;top:295px;color:#7a4848;font-size:13px;letter-spacing:0'>X</div>
<div class='t ' style='left:81.50px;top:328px;color:#7a4848;font-size:13px;letter-spacing:0'>Y</div>
<div class='a' style='left:66px;top:166px;width:1161px;height:1154px;overflow:hidden'><div class='a' style='left:-66px;top:-166px'>
<div class='rl' style='left:68.5px;width:40px;text-align:center;top:172px'>0</div>
<div class='rl' style='left:68.5px;width:40px;text-align:center;top:1301.5px'>0</div>
<div class='rl' style='left:138.14px;width:40px;text-align:center;top:172px'>20</div>
<div class='rl' style='left:138.14px;width:40px;text-align:center;top:1301.5px'>20</div>
<div class='rl' style='left:207.77999999999997px;width:40px;text-align:center;top:172px'>40</div>
<div class='rl' style='left:207.77999999999997px;width:40px;text-align:center;top:1301.5px'>40</div>
<div class='rl' style='left:277.42px;width:40px;text-align:center;top:172px'>60</div>
<div class='rl' style='left:277.42px;width:40px;text-align:center;top:1301.5px'>60</div>
<div class='rl' style='left:347.06px;width:40px;text-align:center;top:172px'>80</div>
<div class='rl' style='left:347.06px;width:40px;text-align:center;top:1301.5px'>80</div>
<div class='rl' style='left:416.70000000000005px;width:40px;text-align:center;top:172px'>100</div>
<div class='rl' style='left:416.70000000000005px;width:40px;text-align:center;top:1301.5px'>100</div>
<div class='rl' style='left:486.34000000000003px;width:40px;text-align:center;top:172px'>120</div>
<div class='rl' style='left:486.34000000000003px;width:40px;text-align:center;top:1301.5px'>120</div>
<div class='rl' style='left:555.98px;width:40px;text-align:center;top:172px'>140</div>
<div class='rl' style='left:555.98px;width:40px;text-align:center;top:1301.5px'>140</div>
<div class='rl' style='left:625.62px;width:40px;text-align:center;top:172px'>160</div>
<div class='rl' style='left:625.62px;width:40px;text-align:center;top:1301.5px'>160</div>
<div class='rl' style='left:695.26px;width:40px;text-align:center;top:172px'>180</div>
<div class='rl' style='left:695.26px;width:40px;text-align:center;top:1301.5px'>180</div>
<div class='rl' style='left:764.9000000000001px;width:40px;text-align:center;top:172px'>200</div>
<div class='rl' style='left:764.9000000000001px;width:40px;text-align:center;top:1301.5px'>200</div>
<div class='rl' style='left:834.5400000000001px;width:40px;text-align:center;top:172px'>220</div>
<div class='rl' style='left:834.5400000000001px;width:40px;text-align:center;top:1301.5px'>220</div>
<div class='rl' style='left:904.1800000000001px;width:40px;text-align:center;top:172px'>240</div>
<div class='rl' style='left:904.1800000000001px;width:40px;text-align:center;top:1301.5px'>240</div>
<div class='rl' style='left:973.82px;width:40px;text-align:center;top:172px'>260</div>
<div class='rl' style='left:973.82px;width:40px;text-align:center;top:1301.5px'>260</div>
<div class='rl' style='left:1043.46px;width:40px;text-align:center;top:172px'>280</div>
<div class='rl' style='left:1043.46px;width:40px;text-align:center;top:1301.5px'>280</div>
<div class='rl' style='left:1113.1000000000001px;width:40px;text-align:center;top:172px'>300</div>
<div class='rl' style='left:1113.1000000000001px;width:40px;text-align:center;top:1301.5px'>300</div>
<div class='rl' style='left:1182.74px;width:40px;text-align:center;top:172px'>320</div>
<div class='rl' style='left:1182.74px;width:40px;text-align:center;top:1301.5px'>320</div>
<div class='rl' style='left:70.3px;top:162.4px'><span style='letter-spacing:.2px'>-</span>40</div>
<div class='rl' style='left:1182.3px;width:40px;text-align:right;top:162.4px'><span style='letter-spacing:.2px'>-</span>40</div>
<div class='rl' style='left:70.3px;top:232.4px'><span style='letter-spacing:.2px'>-</span>20</div>
<div class='rl' style='left:1182.3px;width:40px;text-align:right;top:232.4px'><span style='letter-spacing:.2px'>-</span>20</div>
<div class='rl' style='left:70px;top:302.4px'>0</div>
<div class='rl' style='left:1182.3px;width:40px;text-align:right;top:302.4px'>0</div>
<div class='rl' style='left:70px;top:371.4px'>20</div>
<div class='rl' style='left:1182.3px;width:40px;text-align:right;top:371.4px'>20</div>
<div class='rl' style='left:70px;top:441.4px'>40</div>
<div class='rl' style='left:1182.3px;width:40px;text-align:right;top:441.4px'>40</div>
<div class='rl' style='left:70px;top:511.4px'>60</div>
<div class='rl' style='left:1182.3px;width:40px;text-align:right;top:511.4px'>60</div>
<div class='rl' style='left:70px;top:580.4px'>80</div>
<div class='rl' style='left:1182.3px;width:40px;text-align:right;top:580.4px'>80</div>
<div class='rl' style='left:70px;top:650.4px'>100</div>
<div class='rl' style='left:1182.3px;width:40px;text-align:right;top:650.4px'>100</div>
<div class='rl' style='left:70px;top:720.4px'>120</div>
<div class='rl' style='left:1182.3px;width:40px;text-align:right;top:720.4px'>120</div>
<div class='rl' style='left:70px;top:789.4px'>140</div>
<div class='rl' style='left:1182.3px;width:40px;text-align:right;top:789.4px'>140</div>
<div class='rl' style='left:70px;top:859.4px'>160</div>
<div class='rl' style='left:1182.3px;width:40px;text-align:right;top:859.4px'>160</div>
<div class='rl' style='left:70px;top:929.4px'>180</div>
<div class='rl' style='left:1182.3px;width:40px;text-align:right;top:929.4px'>180</div>
<div class='rl' style='left:70px;top:998.4px'>200</div>
<div class='rl' style='left:1182.3px;width:40px;text-align:right;top:998.4px'>200</div>
<div class='rl' style='left:70px;top:1068.4px'>220</div>
<div class='rl' style='left:1182.3px;width:40px;text-align:right;top:1068.4px'>220</div>
<div class='rl' style='left:70px;top:1138.4px'>240</div>
<div class='rl' style='left:1182.3px;width:40px;text-align:right;top:1138.4px'>240</div>
<div class='rl' style='left:70px;top:1207.4px'>260</div>
<div class='rl' style='left:1182.3px;width:40px;text-align:right;top:1207.4px'>260</div>
<div class='rl' style='left:70px;top:1277.4px'>280</div>
<div class='rl' style='left:1182.3px;width:40px;text-align:right;top:1277.4px'>280</div>
</div></div>
<div class='a' style='left:62px;top:166px;width:4px;height:1154px;background:#1b1b1b;'></div>
<svg class='a' style='left:20px;top:168px' height='6' width='18' fill='#6a6a6a' shape-rendering='crispEdges'><rect y='0' x='0' width='2' height='2'/><rect y='3' x='0' width='2' height='2'/><rect y='0' x='3' width='2' height='2'/><rect y='3' x='3' width='2' height='2'/><rect y='0' x='6' width='2' height='2'/><rect y='3' x='6' width='2' height='2'/><rect y='0' x='9' width='2' height='2'/><rect y='3' x='9' width='2' height='2'/><rect y='0' x='12' width='2' height='2'/><rect y='3' x='12' width='2' height='2'/><rect y='0' x='15' width='2' height='2'/><rect y='3' x='15' width='2' height='2'/></svg>
<svg class='a' style='left:0;top:166px' width='62' height='580' viewBox='0 166 62 580'><path d='M20 180.200V198l4.300-3.400 3.300 7.600 4-1.700-3.300-7.500 5.900-.5z' fill='none' stroke='#f0f0f0' stroke-width='2' stroke-linejoin='round'/><g transform='translate(26.700 223) rotate(28)'><path d='M-3.300 -11.500a3.300 3.300 0 0 1 6.600 0V-9h-6.600z' fill='#f0f0f0'/><rect x='-3.300' y='-7.700' width='6.600' height='13' fill='#f0f0f0'/><path d='M-3.300 6.200h6.600L0 13.200z' fill='none' stroke='#f0f0f0' stroke-width='1'/><path d='M-1 11L0 13.200 1 11z' fill='#f0f0f0'/></g><rect x='-3' y='241.500' width='60.500' height='28.500' rx='3' fill='#424242' stroke='#555' stroke-width='1'/><rect x='16.500' y='244.700' width='21' height='20.800' fill='none' stroke='#ff1212' stroke-width='3'/><path d='M39 254.800V267H27.200z' fill='#2a9a9c'/><path d='M24.200 276l9.100 3.300 4.600 9.500-7.100 8.700H16.300V280.800z' fill='none' stroke='#f0f0f0' stroke-width='1.800' stroke-linejoin='round'/><circle cx='24.2' cy='276' r='1.500' fill='#f0f0f0'/><circle cx='33.3' cy='279.3' r='1.500' fill='#f0f0f0'/><circle cx='37.9' cy='288.8' r='1.500' fill='#f0f0f0'/><circle cx='30.8' cy='297.5' r='1.500' fill='#f0f0f0'/><circle cx='16.3' cy='297.5' r='1.500' fill='#f0f0f0'/><circle cx='16.3' cy='280.8' r='1.500' fill='#f0f0f0'/><path d='M30.600 307c-4.200 4-6.300 9-6.300 14.800l3.400 1.600c2.600-5.200 3.600-10.600 2.900-16.400z' fill='#f0f0f0'/><path d='M39.200 316.200c-4 3.600-8.400 5.200-13 5l-1-3.400c4.800.2 9.400-.5 14-1.600z' fill='#f0f0f0'/><ellipse cx='19' cy='319.300' rx='3.400' ry='2.200' fill='none' stroke='#f0f0f0' stroke-width='1.700' transform='rotate(8 19 319.300)'/><ellipse cx='25.300' cy='326.500' rx='2.300' ry='3.500' fill='none' stroke='#f0f0f0' stroke-width='1.700' transform='rotate(5 25.300 326.500)'/><path d='M24.200 343h5.600l6 16.400h-4.700l-1-3.200h-6.300l-1 3.200h-4.600zM27 347.500l-2.100 5.600h4.200z' fill='#f0f0f0' fill-rule='evenodd'/><path d='M27.200 371.200a9 9 0 0 1 9 9c0 4.500-4.500 9-7.700 14.400a1.500 1.500 0 0 1-2.600 0C22.700 389.200 18.200 384.700 18.200 380.200a9 9 0 0 1 9-9z' fill='#f0f0f0'/><circle cx='27.200' cy='379.800' r='3.200' fill='#1e1e1e'/><g transform='translate(27 415) rotate(-45)'><rect x='-13.300' y='-3' width='26.600' height='6' fill='none' stroke='#f0f0f0' stroke-width='1.500'/><path d='M-10 -3v2.500M-6 -3v2.500M-2 -3v2.500M2 -3v2.500M6 -3v2.500M10 -3v2.500' stroke='#f0f0f0' stroke-width='1'/></g><ellipse cx='27' cy='463' rx='10.8' ry='11.8' fill='none' stroke='#f0f0f0' stroke-width='1'/><ellipse cx='27' cy='463' rx='8.5' ry='9.7' fill='none' stroke='#f0f0f0' stroke-width='1.9'/><ellipse cx='27' cy='463' rx='6.1' ry='7.5' fill='none' stroke='#f0f0f0' stroke-width='1'/><path d='M1 484.500H53M1 555.500H53M1 626.500H40' stroke='#262626' stroke-width='1'/><path d='M24.500 490.700H38.300V505.300H35.300V513.300H21.500V508.300H16.700V494.300H24.500z' fill='none' stroke='#6b6b6b' stroke-width='1.400'/><path d='M21.500 497h9v11h-9z M24.500 494.500v11h11' fill='none' stroke='#4a4a4a' stroke-width='.9' stroke-dasharray='1.500 1.200'/><rect x='16.900' y='522.900' width='15.400' height='16.200' fill='none' stroke='#f0f0f0' stroke-width='1.800'/><rect x='22.700' y='528.700' width='15.400' height='16.200' fill='none' stroke='#f0f0f0' stroke-width='1.800'/><path d='M39 534.500V545.800H28z' fill='#6f9a9c'/><rect x='15' y='561' width='6.200' height='6.200' fill='#f0f0f0'/><rect x='24' y='561' width='6.200' height='6.200' fill='#f0f0f0'/><rect x='33' y='561' width='6.200' height='6.200' fill='#f0f0f0'/><rect x='15' y='570' width='6.200' height='6.200' fill='#f0f0f0'/><rect x='24' y='570' width='6.200' height='6.200' fill='#f0f0f0'/><rect x='33' y='570' width='6.200' height='6.200' fill='#f0f0f0'/><rect x='15' y='579' width='6.200' height='6.200' fill='#f0f0f0'/><rect x='24' y='579' width='6.200' height='6.200' fill='#f0f0f0'/><rect x='33' y='579' width='6.200' height='6.200' fill='#f0f0f0'/><circle cx='27' cy='605' r='5.700' fill='none' stroke='#f0f0f0' stroke-width='1.800'/><rect x='24.400' y='592.800' width='5.200' height='5' fill='#f0f0f0'/><g transform='rotate(45 27 605)'><rect x='24.900' y='593.100' width='4.200' height='4.200' fill='#1e1e1e' stroke='#f0f0f0' stroke-width='1.200'/></g><g transform='rotate(90 27 605)'><rect x='24.900' y='593.100' width='4.200' height='4.200' fill='#1e1e1e' stroke='#f0f0f0' stroke-width='1.200'/></g><g transform='rotate(135 27 605)'><rect x='24.900' y='593.100' width='4.200' height='4.200' fill='#1e1e1e' stroke='#f0f0f0' stroke-width='1.200'/></g><g transform='rotate(180 27 605)'><rect x='24.900' y='593.100' width='4.200' height='4.200' fill='#1e1e1e' stroke='#f0f0f0' stroke-width='1.200'/></g><g transform='rotate(225 27 605)'><rect x='24.900' y='593.100' width='4.200' height='4.200' fill='#1e1e1e' stroke='#f0f0f0' stroke-width='1.200'/></g><g transform='rotate(270 27 605)'><rect x='24.900' y='593.100' width='4.200' height='4.200' fill='#1e1e1e' stroke='#f0f0f0' stroke-width='1.200'/></g><g transform='rotate(315 27 605)'><rect x='24.900' y='593.100' width='4.200' height='4.200' fill='#1e1e1e' stroke='#f0f0f0' stroke-width='1.200'/></g><path d='M17 655V645a11 11 0 0 1 11-11h10' fill='none' stroke='#f0f0f0' stroke-width='1.700'/><path d='M37.500 635v17.500a2 2 0 0 1-2 2H18' fill='none' stroke='#d8d8d8' stroke-width='1.500' stroke-dasharray='1.800 1.500'/><rect x='17' y='707' width='15.400' height='16' fill='none' stroke='#6b6b6b' stroke-width='1.500'/><rect x='23' y='713' width='15.400' height='16' fill='none' stroke='#6b6b6b' stroke-width='1.500'/></svg>
<svg class='a' style='left:20px;top:440px' height='6' width='18' fill='#6a6a6a' shape-rendering='crispEdges'><rect y='0' x='0' width='2' height='2'/><rect y='3' x='0' width='2' height='2'/><rect y='0' x='3' width='2' height='2'/><rect y='3' x='3' width='2' height='2'/><rect y='0' x='6' width='2' height='2'/><rect y='3' x='6' width='2' height='2'/><rect y='0' x='9' width='2' height='2'/><rect y='3' x='9' width='2' height='2'/><rect y='0' x='12' width='2' height='2'/><rect y='3' x='12' width='2' height='2'/><rect y='0' x='15' width='2' height='2'/><rect y='3' x='15' width='2' height='2'/></svg>
<div class='t dim' style='left:8.50px;top:663px;letter-spacing:-0.947px;'>Radius:</div>
<div class='sp' style='left:-4px;top:680px;width:62px;height:21px'><span class='v' style='left:15.500px;color:#9a9a9a'>5.0</span><span class='b' style='width:13px'></span></div>
<div class='a' style='left:1236px;top:163px;width:473px;height:19px;background:linear-gradient(90deg,#000 0%,#2c0b0b 13%,#561616 28%,#812121 43%,#b42e2e 58%,#c03a30 66%,#cf5a30 80%,#dc6e30 92%,#e37a32 100%)'></div>
<div class='t ' style='left:1242.50px;top:166.5px;color:#fff'>Console</div>
<svg class='a' style='left:1681px;top:166.5px' width='27' height='12' viewBox='0 0 27 12'><g fill='none' stroke='#5c646c' stroke-width='1'><rect x='1.500' y='1' width='10' height='10' rx='1.800'/><rect x='15.500' y='1' width='10' height='10' rx='1.800'/><rect x='3.500' y='5' width='4.300' height='4.300'/><path d='M5.700 4.800V3.200h4.300v4.300H8.200'/></g><path d='M17.800 3.300l5.500 5.500M23.300 3.300l-5.500 5.500' stroke='#5c646c' stroke-width='1.700' fill='none'/></svg>
<div class='a' style='left:1238px;top:184px;width:469px;height:498px;background:#1c1c1c;border:1px solid #2a2a2a'></div>
<div class='a mono' style='left:1243px;top:187.300px;font-size:11.670px;line-height:15px'>[OPT:VZHIL,35,254]
Target buffer size found
ok
[G54:0.000,0.000]
[G55:0.000,0.000]
[G56:0.000,0.000]
[G57:0.000,0.000]
[G58:0.000,0.000]
[G59:0.000,0.000]
[G28:0.000,0.000]
[G30:0.000,0.000]
[G92:0.000,0.000]
[TLO:0.000]
[PRB:0.000,0.000:0]
ok
Homing
ok
&lt;Idle|MPos:0.000,0.000|FS:0,0|Te:21.61&gt;
ok
Starting stream
Stream completed in 0:00
Y_LIMIT
<span class='red'>ALARM:1</span>
<span class='red'>Hard limit triggered. Machine position is likely lost due to</span>
<span class='red'>sudden and immediate halt. Re-homing is highly recommended.</span>
Hard limit triggered.
Machine position is likely lost due to sudden and immediate
halt.
Re-homing is highly recommended.
?
&lt;Alarm|MPos:4.825,4.438|FS:0,0|WCO:0.000,0.000|Te:21.61&gt;
ok</div>
<div class='a' style='left:1693px;top:185px;width:13px;height:497px;background:#454545;'></div>
<div class='a' style='left:1693px;top:185px;width:13px;height:13px;background:#4c4c4c;border:1px solid #6a6a6a'></div>
<div class='a' style='left:1695px;top:189px;border:4.500px solid transparent;border-top:0;border-bottom:4.500px solid #d0d0d0'></div>
<div class='a' style='left:1693px;top:263px;width:13px;height:406px;background:#505050;border:1px solid #6a6a6a'></div>
<div class='a' style='left:1693px;top:669px;width:13px;height:13px;background:#4c4c4c;border:1px solid #6a6a6a'></div>
<div class='a' style='left:1695px;top:673.500px;border:4.500px solid transparent;border-bottom:0;border-top:4.500px solid #d0d0d0'></div>
<div class='a' style='left:1238px;top:685px;width:400px;height:24px;background:#2d2d2d;border:1.500px solid #3b99e0;border-radius:3px'></div>
<div class='a' style='left:1241px;top:690px;width:1px;height:15px;background:#e8e8e8;'></div>
<div class='t ' style='left:1241.50px;top:691px;color:#8a8a8a'>(type commands here)</div>
<div class='t ' style='left:1641.00px;top:691px;'>Show all</div>
<div class='tg' style='left:1692px;top:693.500px;width:14.500px;background:#a40a0a;border-radius:3px 1px 1px 3px'><i style='left:-1px;background:#dcd4d4'></i></div>
<div class='a' style='left:1237.5px;top:712px;width:90.5px;height:22.5px;border:1px solid #383838;border-radius:0 0 4px 4px;background:#1e1e1e'></div>
<div class='t ' style='left:1248.20px;top:718px;letter-spacing:-0.486px;'>Cuts / Layers</div>
<div class='a' style='left:1329.5px;top:712px;width:52.5px;height:22.5px;border:1px solid #383838;border-radius:0 0 4px 4px;background:#1e1e1e'></div>
<div class='t ' style='left:1340.00px;top:718px;'>Move</div>
<div class='a' style='left:1383.5px;top:711px;width:65.5px;height:25.5px;border:1px solid #444;border-top:0;border-radius:0 0 4px 4px;background:#1e1e1e'></div>
<div class='t ' style='left:1394.00px;top:719px;'>Console</div>
<div class='a' style='left:1451px;top:712px;width:61px;height:22.5px;border:1px solid #383838;border-radius:0 0 4px 4px;background:#1e1e1e'></div>
<div class='t ' style='left:1461.00px;top:718px;'>Macros</div>
<div class='a' style='left:1513px;top:712px;width:87px;height:22.5px;border:1px solid #383838;border-radius:0 0 4px 4px;background:#1e1e1e'></div>
<div class='t ' style='left:1524.00px;top:718px;letter-spacing:-0.483px;'>Variable Text</div>
<svg class='a' style='left:1466px;top:739px' height='6' width='18' fill='#6a6a6a' shape-rendering='crispEdges'><rect y='0' x='0' width='2' height='2'/><rect y='3' x='0' width='2' height='2'/><rect y='0' x='3' width='2' height='2'/><rect y='3' x='3' width='2' height='2'/><rect y='0' x='6' width='2' height='2'/><rect y='3' x='6' width='2' height='2'/><rect y='0' x='9' width='2' height='2'/><rect y='3' x='9' width='2' height='2'/><rect y='0' x='12' width='2' height='2'/><rect y='3' x='12' width='2' height='2'/><rect y='0' x='15' width='2' height='2'/><rect y='3' x='15' width='2' height='2'/></svg>
<svg class='a' style='left:1233px;top:736px' width='6' height='18' fill='#6a6a6a' shape-rendering='crispEdges'><rect x='0' y='0' width='2' height='2'/><rect x='0' y='3' width='2' height='2'/><rect x='0' y='6' width='2' height='2'/><rect x='0' y='9' width='2' height='2'/><rect x='0' y='12' width='2' height='2'/><rect x='0' y='15' width='2' height='2'/></svg>
<div class='a' style='left:1236px;top:745px;width:473px;height:19px;background:linear-gradient(90deg,#000 0%,#2c0b0b 13%,#561616 28%,#812121 43%,#b42e2e 58%,#c03a30 66%,#cf5a30 80%,#dc6e30 92%,#e37a32 100%)'></div>
<div class='t ' style='left:1242.50px;top:748.5px;color:#fff'>Laser</div>
<svg class='a' style='left:1681px;top:748.5px' width='27' height='12' viewBox='0 0 27 12'><g fill='none' stroke='#5c646c' stroke-width='1'><rect x='1.500' y='1' width='10' height='10' rx='1.800'/><rect x='15.500' y='1' width='10' height='10' rx='1.800'/><rect x='3.500' y='5' width='4.300' height='4.300'/><path d='M5.700 4.800V3.200h4.300v4.300H8.200'/></g><path d='M17.800 3.300l5.500 5.500M23.300 3.300l-5.500 5.500' stroke='#5c646c' stroke-width='1.700' fill='none'/></svg>
<div class='t ' style='left:1237.50px;top:768px;'>Ready</div>
<div class='a' style='left:1238px;top:786px;width:153px;height:58px;background:linear-gradient(#575757,#4a4a4a);border:1px solid #676767;border-radius:2px;display:flex;align-items:center;justify-content:center;white-space:pre;padding-top:2px'><svg width='15' height='16' viewBox='0 0 15 16' style='margin-right:3px;margin-top:-2px'><rect x='0' y='0' width='5.500' height='16' fill='#f0f0f0'/><rect x='8.500' y='0' width='5.500' height='16' fill='#f0f0f0'/></svg><span style='letter-spacing:-.6px'>Pause</span></div>
<div class='a' style='left:1396px;top:786px;width:153px;height:58px;background:linear-gradient(#575757,#4a4a4a);border:1px solid #676767;border-radius:2px;display:flex;align-items:center;justify-content:center;white-space:pre;padding-top:2px'><svg width='16' height='16' viewBox='0 0 16 16' style='margin-right:2px;margin-top:-2px'><rect x='0' y='0' width='16' height='16' fill='#f0f0f0'/></svg>Stop</div>
<div class='a' style='left:1554px;top:786px;width:153px;height:58px;background:linear-gradient(#575757,#4a4a4a);border:1px solid #676767;border-radius:2px;display:flex;align-items:center;justify-content:center;white-space:pre;padding-top:2px'><svg width='15' height='16' viewBox='0 0 15 16' style='margin-right:3px;margin-top:-2px'><path d='M0 0l14.500 8L0 16z' fill='#f0f0f0'/></svg><span style='letter-spacing:-.3px'>Start</span></div>
<div class='a' style='left:1238px;top:847px;width:153px;height:58px;background:linear-gradient(#575757,#4a4a4a);border:1px solid #676767;border-radius:2px;display:flex;align-items:center;justify-content:center;white-space:pre;padding-top:2px'><svg width='16' height='16' viewBox='0 0 16 16' style='margin-right:2px;margin-top:-2px'><path d='M5.800 1.100H1.100v4.700M10.200 1.100h4.700v4.700M5.800 14.900H1.100v-4.700M10.200 14.900h4.700v-4.700' fill='none' stroke='#f0f0f0' stroke-width='2.200'/></svg>Frame</div>
<div class='a' style='left:1396px;top:847px;width:153px;height:58px;background:linear-gradient(#575757,#4a4a4a);border:1px solid #676767;border-radius:2px;display:flex;align-items:center;justify-content:center;white-space:pre;padding-top:2px'><svg width='17' height='17' viewBox='0 0 17 17' style='margin-right:2px;margin-top:-2px'><circle cx='8.500' cy='8.500' r='7' fill='none' stroke='#f0f0f0' stroke-width='2' stroke-dasharray='3.700 1.800' stroke-dashoffset='1.800'/></svg>Frame</div>
<div class='a' style='left:1554px;top:847px;width:153px;height:58px;background:linear-gradient(#575757,#4a4a4a);border:1px solid #676767;border-radius:2px;display:flex;align-items:center;justify-content:center;white-space:pre;padding-top:2px'><span style='letter-spacing:-.5px'>Save GCode</span></div>
<div class='a' style='left:1238px;top:908px;width:110px;height:22px;background:linear-gradient(#525252,#484848);border:1px solid #6a6a6a;border-radius:2px;display:flex;align-items:center;justify-content:center;white-space:pre'><svg width='16' height='14' viewBox='0 0 16 14' style='margin-right:2px;margin-left:-4px'><path d='M.8 7.400L8 1.200l7.200 6.200M3 6.200V13h3.600V8.600h2.800V13H13V6.200M12.300 1.400v3.400' fill='none' stroke='#f0f0f0' stroke-width='2'/></svg><span style='padding-top:1.500px'>Home</span></div>
<div class='a' style='left:1356px;top:908px;width:110px;height:22px;background:linear-gradient(#525252,#484848);border:1px solid #6a6a6a;border-radius:2px;display:flex;align-items:center;justify-content:center;white-space:pre'><span style='padding-top:1.500px'>Go to Origin</span></div>
<div class='t ' style='left:1527.00px;top:913px;'>Start From:</div>
<div class='cb' style='left:1592px;top:908px;width:115px;height:22px;'><span class='v' style='top:4px'>Absolute Coords</span><span class='ar'></span></div>
<div class='t ' style='left:1531.00px;top:952px;'>Job Origin</div>
<div class='a' style='left:1594px;top:935px;width:112px;height:50px;background:#1b1b1b;border:1px solid #292929;border-radius:3px'></div>
<div class='a' style='left:1596.5px;top:937.5px;width:13px;height:13px;border-radius:7px;background:#1a1a1a;border:1px solid #131313'></div>
<div class='a' style='left:1632.5px;top:937.5px;width:13px;height:13px;border-radius:7px;background:#1a1a1a;border:1px solid #131313'></div>
<div class='a' style='left:1667.5px;top:937.5px;width:13px;height:13px;border-radius:7px;background:#1a1a1a;border:1px solid #131313'></div>
<div class='a' style='left:1596.5px;top:952.0px;width:13px;height:13px;border-radius:7px;background:#1a1a1a;border:1px solid #131313'></div>
<div class='a' style='left:1632.5px;top:952.0px;width:13px;height:13px;border-radius:7px;background:#1a1a1a;border:1px solid #131313'></div>
<div class='a' style='left:1667.5px;top:952.0px;width:13px;height:13px;border-radius:7px;background:#1a1a1a;border:1px solid #131313'></div>
<div class='a' style='left:1596.5px;top:966.5px;width:13px;height:13px;border-radius:7px;background:#1a1a1a;border:1px solid #131313'></div>
<div class='a' style='left:1632.5px;top:966.5px;width:13px;height:13px;border-radius:7px;background:#1a1a1a;border:1px solid #131313'></div>
<div class='a' style='left:1667.5px;top:966.5px;width:13px;height:13px;border-radius:7px;background:#1a1a1a;border:1px solid #131313'></div>
<div class='a' style='left:1599.500px;top:940.500px;width:7px;height:7px;border-radius:4px;background:#8a8a8a'></div>
<div class='a' style='left:1474px;top:986.3px;width:233px;height:21.5px;background:linear-gradient(#525252,#484848);border:1px solid #6a6a6a;border-radius:2px;display:flex;align-items:center;justify-content:center;white-space:pre'><svg width='17' height='16' viewBox='0 0 17 16' style='margin-right:2px'><path d='M8.500 0v4M8.500 12v4M0 8h3M14 8h3' stroke='#f0f0f0' stroke-width='1.300'/><path d='M8.500 5v6M5.500 8h6' stroke='#e83a2a' stroke-width='1.800'/></svg><span style='letter-spacing:-.19px;padding-top:1.500px'>Show Last Position</span></div>
<div class='a' style='left:1238px;top:1011px;width:78px;height:21.5px;background:linear-gradient(#525252,#484848);border:1px solid #6a6a6a;border-radius:2px;display:flex;align-items:center;justify-content:center;white-space:pre'><span style='padding-top:2px'>Devices</span></div>
<div class='cb' style='left:1324px;top:1011px;width:188px;height:21.5px;'><span class='v' style='top:3px'>COM6</span><span class='ar'></span></div>
<div class='cb' style='left:1520px;top:1011px;width:187px;height:21.500px'><span class='a' style='left:4px;top:2px;width:16px;height:16px;background:#f4f4f4'></span><span class='a' style='left:4.500px;top:3px;font-size:9px;line-height:12px;color:#222;letter-spacing:-.5px'>grbl</span><span class='v' style='left:24px;letter-spacing:-.4px'>Trent K40+</span><span class='ar'></span></div>
<div class='a' style='left:1237px;top:1296.5px;width:50px;height:24px;border:1px solid #444;border-top:0;border-radius:0 0 4px 4px;background:#1e1e1e'></div>
<div class='t ' style='left:1248.00px;top:1303.0px;'>Laser</div>
<div class='a' style='left:1288.5px;top:1297px;width:103px;height:21.5px;border:1px solid #383838;border-radius:0 0 4px 4px;background:#1e1e1e'></div>
<div class='t ' style='left:1299.00px;top:1302.5px;'>Material Library</div>
<div class='a' style='left:1227px;top:166px;width:9px;height:1154px;background:#1e1e1e;'></div>
<div class='hl' style='left:0px;top:1323px;width:1709px;background:#5c5c5c'></div>
<svg class='a' style='left:-3px;top:1334px' width='6' height='18' fill='#6a6a6a' shape-rendering='crispEdges'><rect x='0' y='0' width='2' height='2'/><rect x='3' y='0' width='2' height='2'/><rect x='0' y='3' width='2' height='2'/><rect x='3' y='3' width='2' height='2'/><rect x='0' y='6' width='2' height='2'/><rect x='3' y='6' width='2' height='2'/><rect x='0' y='9' width='2' height='2'/><rect x='3' y='9' width='2' height='2'/><rect x='0' y='12' width='2' height='2'/><rect x='3' y='12' width='2' height='2'/><rect x='0' y='15' width='2' height='2'/><rect x='3' y='15' width='2' height='2'/></svg>
<div class='a' style='left:5.500px;top:1328.500px;width:29px;height:28px;border:1.500px solid #6a6a6a;border-radius:3px;background:#333'></div>
<div class='a' style='left:8px;top:1330px;width:24px;height:24px;background:#000000;color:#fff;text-align:center;line-height:24px;font-size:12px;letter-spacing:0;padding-right:1.500px'>00</div>
<div class='a' style='left:41px;top:1330px;width:24px;height:24px;background:#0000ff;color:#fff;text-align:center;line-height:24px;font-size:12px;letter-spacing:0;padding-right:1.500px'>01</div>
<div class='a' style='left:74px;top:1330px;width:24px;height:24px;background:#ff0000;color:#fff;text-align:center;line-height:24px;font-size:12px;letter-spacing:0;padding-right:1.500px'>02</div>
<div class='a' style='left:107px;top:1330px;width:24px;height:24px;background:#00e000;color:#000;text-align:center;line-height:24px;font-size:12px;letter-spacing:0;padding-right:1.500px'>03</div>
<div class='a' style='left:140px;top:1330px;width:24px;height:24px;background:#d0d000;color:#000;text-align:center;line-height:24px;font-size:12px;letter-spacing:0;padding-right:1.500px'>04</div>
<div class='a' style='left:173px;top:1330px;width:24px;height:24px;background:#ff8000;color:#000;text-align:center;line-height:24px;font-size:12px;letter-spacing:0;padding-right:1.500px'>05</div>
<div class='a' style='left:206px;top:1330px;width:24px;height:24px;background:#00e0e0;color:#000;text-align:center;line-height:24px;font-size:12px;letter-spacing:0;padding-right:1.500px'>06</div>
<div class='a' style='left:239px;top:1330px;width:24px;height:24px;background:#ff00ff;color:#fff;text-align:center;line-height:24px;font-size:12px;letter-spacing:0;padding-right:1.500px'>07</div>
<div class='a' style='left:272px;top:1330px;width:24px;height:24px;background:#b4b4b4;color:#000;text-align:center;line-height:24px;font-size:12px;letter-spacing:0;padding-right:1.500px'>08</div>
<div class='a' style='left:305px;top:1330px;width:24px;height:24px;background:#0000a0;color:#fff;text-align:center;line-height:24px;font-size:12px;letter-spacing:0;padding-right:1.500px'>09</div>
<div class='a' style='left:338px;top:1330px;width:24px;height:24px;background:#a00000;color:#fff;text-align:center;line-height:24px;font-size:12px;letter-spacing:0;padding-right:1.500px'>10</div>
<div class='a' style='left:371px;top:1330px;width:24px;height:24px;background:#00a000;color:#fff;text-align:center;line-height:24px;font-size:12px;letter-spacing:0;padding-right:1.500px'>11</div>
<div class='a' style='left:404px;top:1330px;width:24px;height:24px;background:#a0a000;color:#000;text-align:center;line-height:24px;font-size:12px;letter-spacing:0;padding-right:1.500px'>12</div>
<div class='a' style='left:437px;top:1330px;width:24px;height:24px;background:#c08000;color:#000;text-align:center;line-height:24px;font-size:12px;letter-spacing:0;padding-right:1.500px'>13</div>
<div class='a' style='left:470px;top:1330px;width:24px;height:24px;background:#00a0ff;color:#fff;text-align:center;line-height:24px;font-size:12px;letter-spacing:0;padding-right:1.500px'>14</div>
<div class='a' style='left:503px;top:1330px;width:24px;height:24px;background:#a000a0;color:#fff;text-align:center;line-height:24px;font-size:12px;letter-spacing:0;padding-right:1.500px'>15</div>
<div class='a' style='left:536px;top:1330px;width:24px;height:24px;background:#808080;color:#fff;text-align:center;line-height:24px;font-size:12px;letter-spacing:0;padding-right:1.500px'>16</div>
<div class='a' style='left:569px;top:1330px;width:24px;height:24px;background:#7d87b9;color:#000;text-align:center;line-height:24px;font-size:12px;letter-spacing:0;padding-right:1.500px'>17</div>
<div class='a' style='left:602px;top:1330px;width:24px;height:24px;background:#bb7784;color:#000;text-align:center;line-height:24px;font-size:12px;letter-spacing:0;padding-right:1.500px'>18</div>
<div class='a' style='left:635px;top:1330px;width:24px;height:24px;background:#4a6fe3;color:#fff;text-align:center;line-height:24px;font-size:12px;letter-spacing:0;padding-right:1.500px'>19</div>
<div class='a' style='left:668px;top:1330px;width:24px;height:24px;background:#d33f6a;color:#fff;text-align:center;line-height:24px;font-size:12px;letter-spacing:0;padding-right:1.500px'>20</div>
<div class='a' style='left:701px;top:1330px;width:24px;height:24px;background:#8cd78c;color:#000;text-align:center;line-height:24px;font-size:12px;letter-spacing:0;padding-right:1.500px'>21</div>
<div class='a' style='left:734px;top:1330px;width:24px;height:24px;background:#f0b98d;color:#000;text-align:center;line-height:24px;font-size:12px;letter-spacing:0;padding-right:1.500px'>22</div>
<div class='a' style='left:767px;top:1330px;width:24px;height:24px;background:#f6c4e1;color:#000;text-align:center;line-height:24px;font-size:12px;letter-spacing:0;padding-right:1.500px'>23</div>
<div class='a' style='left:800px;top:1330px;width:24px;height:24px;background:#fa9ed4;color:#000;text-align:center;line-height:24px;font-size:12px;letter-spacing:0;padding-right:1.500px'>24</div>
<div class='a' style='left:833px;top:1330px;width:24px;height:24px;background:#500a78;color:#fff;text-align:center;line-height:24px;font-size:12px;letter-spacing:0;padding-right:1.500px'>25</div>
<div class='a' style='left:866px;top:1330px;width:24px;height:24px;background:#b45a00;color:#fff;text-align:center;line-height:24px;font-size:12px;letter-spacing:0;padding-right:1.500px'>26</div>
<div class='a' style='left:899px;top:1330px;width:24px;height:24px;background:#004754;color:#fff;text-align:center;line-height:24px;font-size:12px;letter-spacing:0;padding-right:1.500px'>27</div>
<div class='a' style='left:932px;top:1330px;width:24px;height:24px;background:#86fa88;color:#000;text-align:center;line-height:24px;font-size:12px;letter-spacing:0;padding-right:1.500px'>28</div>
<div class='a' style='left:965px;top:1330px;width:24px;height:24px;background:#ffdb66;color:#000;text-align:center;line-height:24px;font-size:12px;letter-spacing:0;padding-right:1.500px'>29</div>
<div class='a' style='left:997.5px;top:1332px;width:1px;height:20px;background:#2a2a2a;'></div>
<div class='a' style='left:1004.5px;top:1330px;width:24px;height:24px;background:#f36926;color:#000;text-align:center;line-height:24px;font-size:12px;letter-spacing:0'>T1</div>
<div class='a' style='left:1037.5px;top:1330px;width:24px;height:24px;background:#0c96d9;color:#fff;text-align:center;line-height:24px;font-size:12px;letter-spacing:0'>T2</div>
<div class='hl' style='left:0px;top:1361px;width:1709px;background:#5c5c5c'></div>
<div class='t ' style='left:4.20px;top:1369px;letter-spacing:-0.622px;'>9.00, y: 161.00 mm  w: 186.00,  h: 130.00</div>
<div class='t ' style='left:-8.80px;top:1369px;'>x:</div>
<div class='t ' style='left:645.00px;top:1369px;'>Stream completed in 0:00</div>
<svg class='a' style='left:1695px;top:1373px' width='14' height='14' viewBox='0 0 14 14' shape-rendering='crispEdges'><g fill='#6e6e6e'><rect x='11' y='2' width='2' height='2'/><rect x='8' y='5' width='2' height='2'/><rect x='11' y='5' width='2' height='2'/><rect x='5' y='8' width='2' height='2'/><rect x='8' y='8' width='2' height='2'/><rect x='11' y='8' width='2' height='2'/><rect x='2' y='11' width='2' height='2'/><rect x='5' y='11' width='2' height='2'/><rect x='8' y='11' width='2' height='2'/><rect x='11' y='11' width='2' height='2'/></g></svg>
</div></body></html>
